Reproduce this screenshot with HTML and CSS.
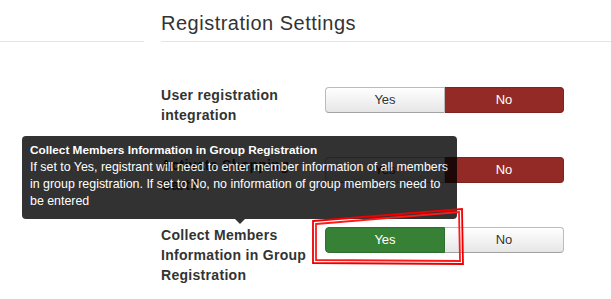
FILE: index.html
```html
<!DOCTYPE html>
<html lang="en">
<head>
    <meta charset="UTF-8">
    <meta name="viewport" content="width=device-width, initial-scale=1.0">
    <title>Registration Settings</title>
    <link rel="stylesheet" href="styles.css">
</head>
<body>
    <div class="page">
        <aside class="sidebar">
            <div class="sidebar-head"></div>
        </aside>
        <main class="main">
            <div class="legend">Registration Settings</div>

            <div class="control-group">
                <div class="control-label">User registration integration</div>
                <div class="btn-group">
                    <span class="btn">Yes</span>
                    <span class="btn btn-danger">No</span>
                </div>
            </div>

            <div class="control-group">
                <div class="control-label">Activate Shopping Cart?</div>
                <div class="btn-group">
                    <span class="btn">Yes</span>
                    <span class="btn btn-danger">No</span>
                </div>
            </div>

            <div class="control-group">
                <div class="control-label">Collect Members Information in Group Registration</div>
                <div class="btn-group">
                    <span class="btn btn-success">Yes</span>
                    <span class="btn">No</span>
                </div>
            </div>
        </main>
    </div>

    <!-- tooltip sobre el campo -->
    <div class="tooltip">
        <div class="tooltip-inner">
            <strong class="tooltip-title">Collect Members Information in Group Registration</strong><br>
            If set to Yes, registrant will need to enter member information of all members in group registration. If set to No, no information of group members need to be entered
        </div>
        <div class="tooltip-arrow"></div>
    </div>

    <!-- marca roja dibujada a mano -->
    <svg class="annotation" width="611" height="299" viewBox="0 0 611 299">
        <polygon points="313,221 462,209 463,264 313,263" fill="none" stroke="#ee0000" stroke-width="1.8"/>
        <polygon points="316,224 459,212 460,261 316,260" fill="none" stroke="#ff1a1a" stroke-width="1.8"/>
    </svg>
</body>
</html>
```

FILE: styles.css
```css
/* Estilos generales */
body {
    font-family: "Liberation Sans", Arial, sans-serif;
    margin: 0;
    padding: 0;
    background-color: #ffffff;
    color: #333333;
}

.page {
    display: flex;
}

.sidebar {
    width: 144px;
    flex: none;
}

.sidebar-head {
    height: 41px;
    border-bottom: 1px solid #e5e5e5;
}

.main {
    flex: 1;
    margin-left: 17px;
}

.legend {
    font-size: 20px;
    letter-spacing: 0.5px;
    line-height: 36px;
    padding-top: 5px;
    border-bottom: 1px solid #e5e5e5;
    margin-bottom: 43px;
}

/* Filas del formulario */
.control-group {
    display: grid;
    grid-template-columns: 164px 239px;
    align-items: start;
    margin-bottom: 30px;
}

.control-group:last-child {
    margin-bottom: 0;
}

.control-label {
    font-size: 14px;
    font-weight: bold;
    letter-spacing: 0.3px;
    line-height: 20px;
    width: 150px;
    color: #333333;
}

.btn-group {
    display: flex;
    margin-top: 2px;
}

.btn {
    flex: 1;
    height: 26px;
    box-sizing: border-box;
    line-height: 24px;
    text-align: center;
    font-size: 13px;
    color: #333333;
    background: linear-gradient(#ffffff, #e6e6e6);
    border: 1px solid #bbbbbb;
    border-bottom-color: #a2a2a2;
    text-shadow: 0 1px 1px rgba(255, 255, 255, 0.75);
}

.btn:first-child {
    border-radius: 4px 0 0 4px;
}

.btn:last-child {
    border-radius: 0 4px 4px 0;
    border-left: none;
}

.btn-danger {
    background: #942a25;
    border-color: #7e231f;
    color: #ffffff;
    text-shadow: none;
}

.btn-success {
    background: #378137;
    border-color: #2f6e2f;
    color: #ffffff;
    text-shadow: none;
}

/* Tooltip */
.tooltip {
    position: absolute;
    left: 22px;
    top: 136px;
    width: 435px;
    opacity: 0.8;
}

.tooltip-inner {
    background-color: #000000;
    color: #ffffff;
    font-size: 12.4px;
    line-height: 17px;
    padding: 6px 4px 7px 8px;
    border-radius: 4px;
    height: 83px;
    box-sizing: border-box;
}

.tooltip-title {
    font-size: 11.8px;
}

.tooltip-arrow {
    width: 0;
    height: 0;
    margin: 0 auto;
    border-left: 5px solid transparent;
    border-right: 5px solid transparent;
    border-top: 5px solid #000000;
}

.annotation {
    position: absolute;
    left: 0;
    top: 0;
    pointer-events: none;
}
```
